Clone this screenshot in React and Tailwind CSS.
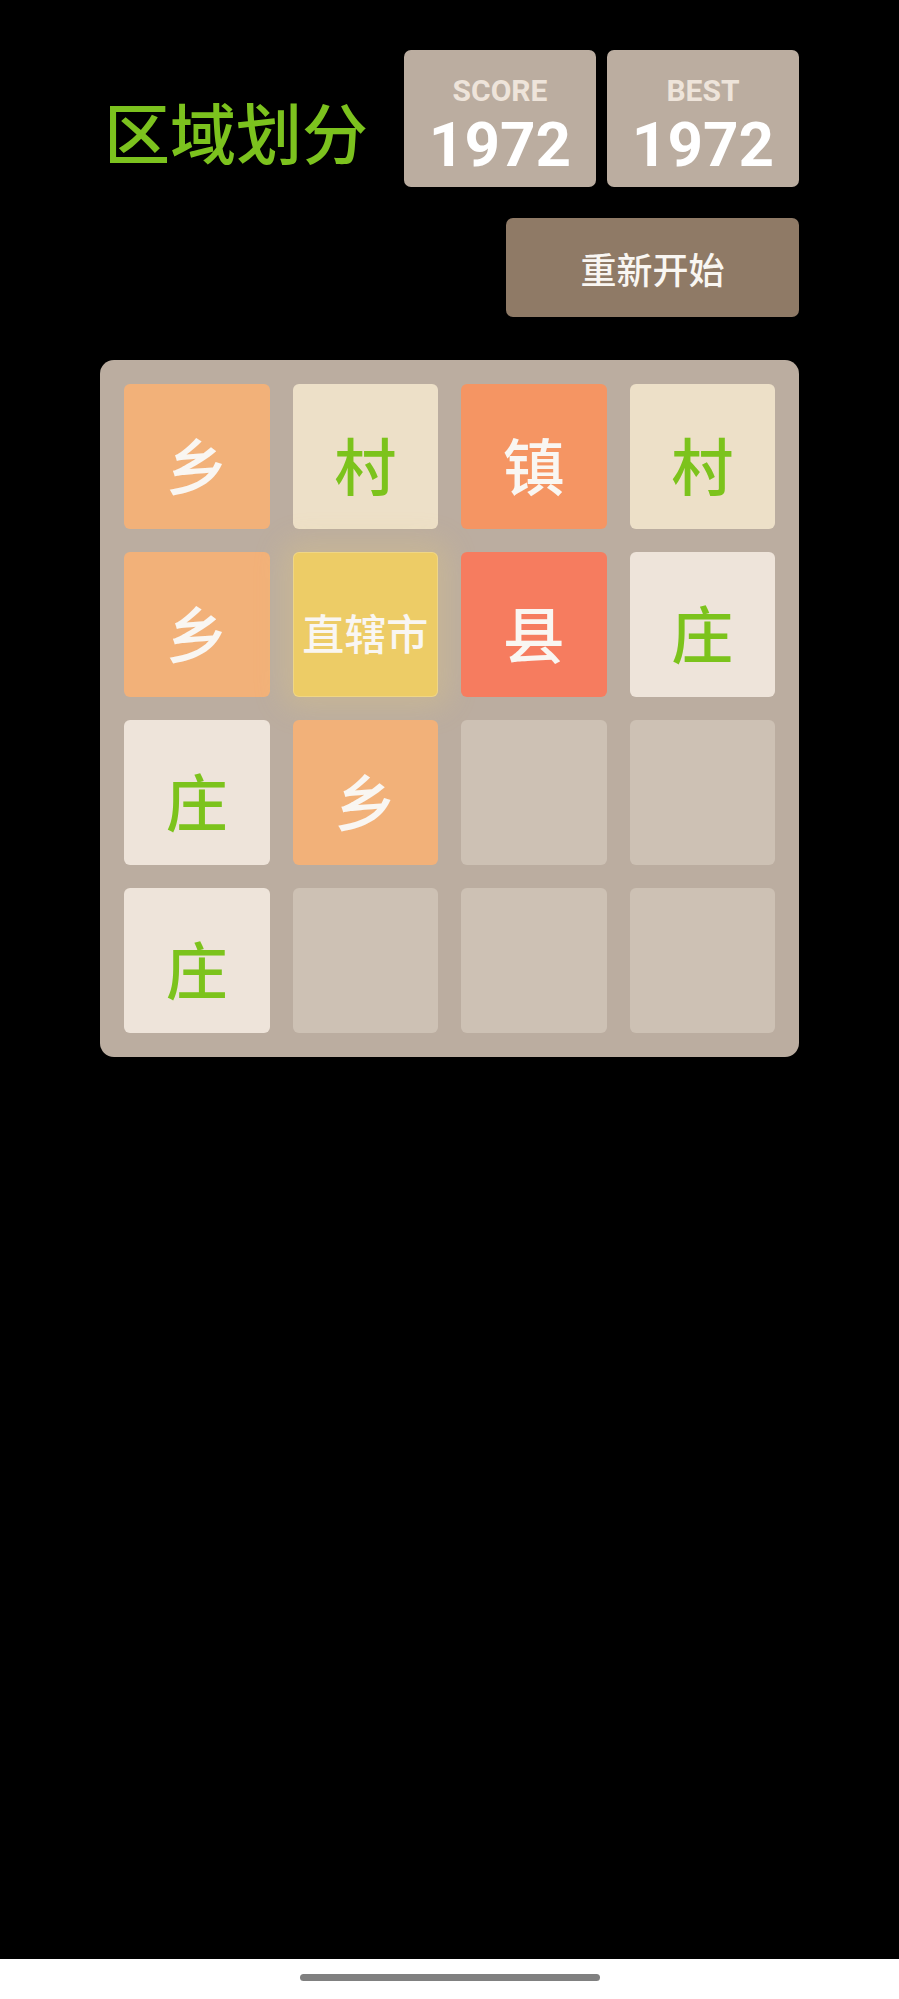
import React from 'react';

const cjk = { fontFamily: '"Noto Sans CJK SC", "Noto Sans", sans-serif' };
const num = { fontFamily: 'Roboto, "Liberation Sans", sans-serif' };

const tileStyles = {
  乡: 'bg-[#f2b179] text-[#f9f6f2]',
  村: 'bg-[#ede0c8] text-[#7cc31c]',
  镇: 'bg-[#f59563] text-[#f9f6f2]',
  县: 'bg-[#f67c5f] text-[#f9f6f2]',
  庄: 'bg-[#eee4da] text-[#7cc31c]',
  直辖市: 'bg-[#edcc66] text-[#f9f6f2] shadow-[0_0_30px_10px_rgba(243,215,116,0.24),inset_0_0_0_1px_rgba(255,255,255,0.2)]',
};

const board = [
  ['乡', '村', '镇', '村'],
  ['乡', '直辖市', '县', '庄'],
  ['庄', '乡', '', ''],
  ['庄', '', '', ''],
];

const ScoreBox = ({ label, value }) => (
  <div className="w-[192px] h-[137px] rounded-[7px] bg-[#bbada0] flex flex-col items-center pt-[26px]" style={num}>
    <div className="text-[30px] leading-none font-bold text-[#eee4da]">{label}</div>
    <div className="mt-[8px] text-[62px] leading-none font-bold text-white">{value}</div>
  </div>
);

const Tile = ({ name }) => {
  if (!name) return <div className="h-[145px] rounded-[6px] bg-[#cdc1b4]" />;
  const small = name.length > 1;
  return (
    <div
      className={`h-[145px] rounded-[6px] flex items-center justify-center pt-[14px] font-medium ${tileStyles[name]} ${small ? 'text-[42px]' : 'text-[62px]'} leading-none`}
      style={cjk}
    >
      {name}
    </div>
  );
};

export default function App() {
  return (
    <div className="w-[899px] h-[1999px] bg-black flex flex-col">
      <div className="h-[1959px]">
        <div className="w-[699px] mx-auto pt-[50px]">
          <div className="flex justify-between items-start">
            <h1 className="mt-[47px] pl-[4px] text-[66px] leading-none font-medium text-[#7cc21e]" style={cjk}>
              区域划分
            </h1>
            <div className="flex gap-[11px]">
              <ScoreBox label="SCORE" value="1972" />
              <ScoreBox label="BEST" value="1972" />
            </div>
          </div>

          <div className="flex justify-end mt-[31px]">
            <button className="w-[293px] h-[99px] rounded-[7px] bg-[#8f7a66] text-[#f9f6f2] text-[36px] leading-none font-medium" style={cjk}>
              重新开始
            </button>
          </div>

          <div className="mt-[43px] rounded-[14px] bg-[#bbada0] p-[24px] grid grid-cols-4 gap-[23px]">
            {board.flat().map((name, i) => (
              <Tile key={i} name={name} />
            ))}
          </div>
        </div>
      </div>
      <div className="h-[40px] bg-white flex justify-center pt-[15px]">
        <div className="w-[300px] h-[7px] rounded-full bg-[#808080]" />
      </div>
    </div>
  );
}
